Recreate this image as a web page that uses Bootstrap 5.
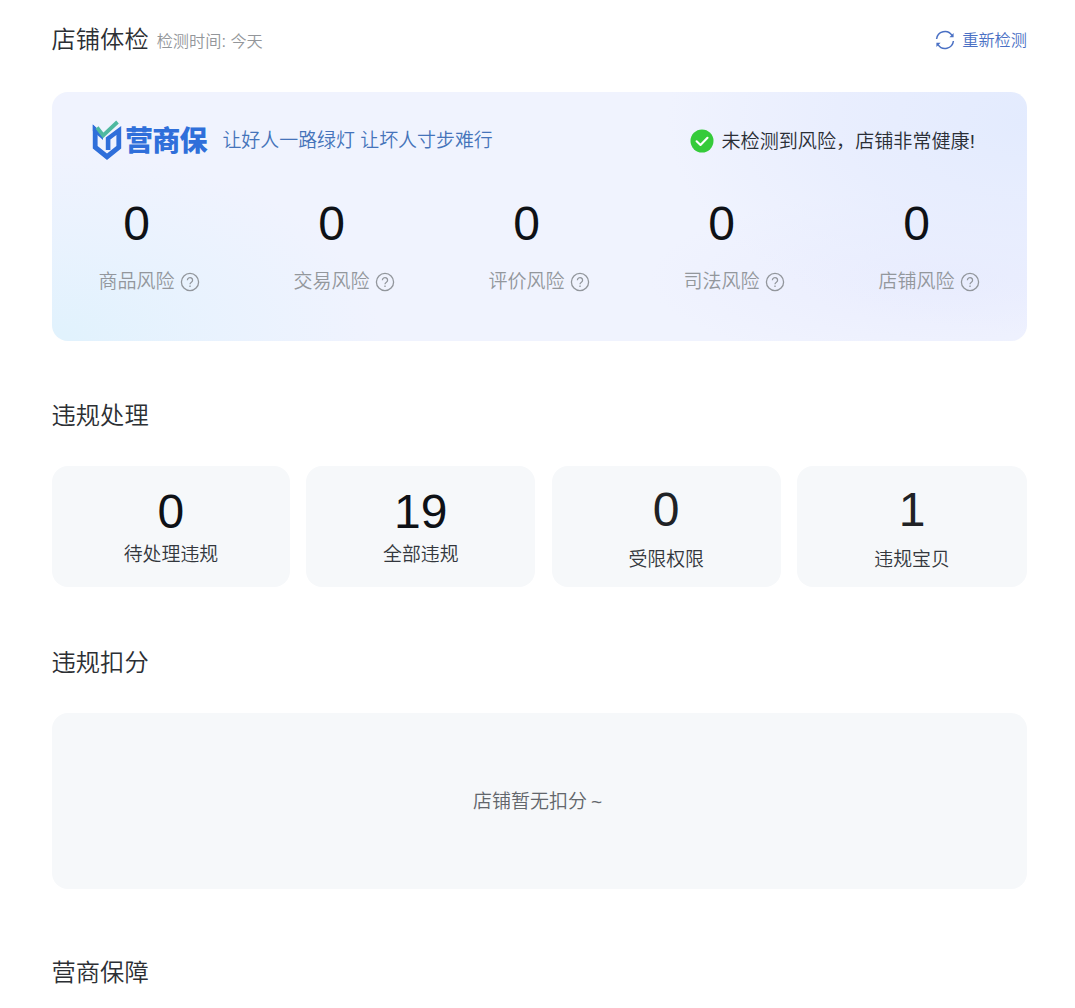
<!DOCTYPE html>
<html lang="zh-CN">
<head>
<meta charset="utf-8">
<meta name="viewport" content="width=device-width, initial-scale=1">
<title>店铺体检</title>
<link href="https://cdn.jsdelivr.net/npm/bootstrap@5.3.0/dist/css/bootstrap.min.css" rel="stylesheet">
<style>
body { font-family: "Liberation Sans", "Noto Sans CJK SC", sans-serif; font-weight: 350; color: #33373d; background: #fff; overflow: hidden; }
.page { padding: 20px 48px 0 52px; height: 1008px; overflow: hidden; }
.section-title { font-size: 24.3px; line-height: 40px; font-weight: 350; color: #2c2f34; margin: 0 0 0 -.5px; white-space: nowrap; }
.check-time { font-size: 16.2px; color: #93969a; margin-left: 8px; padding-top: 2px; }
.recheck { font-size: 16.2px; color: #4a70c4; text-decoration: none; gap: 7px; }
.banner { margin-top: 32px; height: 249px; border-radius: 16px; padding-top: 24px;
  background:
    radial-gradient(ellipse 330px 190px at 0% 100%, rgba(225,242,253,1) 5%, rgba(229,242,254,.65) 50%, rgba(240,243,254,0) 100%),
    radial-gradient(ellipse 360px 210px at 100% 12%, rgba(227,235,254,1) 0%, rgba(230,236,254,.75) 50%, rgba(240,243,254,0) 100%),
    radial-gradient(ellipse 300px 90px at 92% 75%, rgba(233,236,254,.9) 0%, rgba(240,243,254,0) 100%),
    #f0f3fe; }
.banner-head { height: 50px; padding: 0 50px 0 40px; }
.brand-name { font-size: 28px; line-height: 40px; font-weight: 900; color: #2f6fda; letter-spacing: -.7px; margin-left: 3px; padding-top: 1px; }
.slogan { font-size: 18.95px; line-height: 40px; color: #4573ba; margin-left: 15.5px; }
.health { font-size: 19.1px; line-height: 40px; color: #2a2e36; gap: 7px; margin-right: 2px; }
.health-text { padding-top: 2px; }
.risk-row { margin-top: 34px; }
.risk-item { width: 195px; }
.risk-box { width: 169px; }
.figure-num { font-size: 48px; line-height: 48px; font-weight: 400; color: #0e1116; }
.risk-label { font-size: 19px; line-height: 30px; color: #93979c; gap: 5px; margin-top: 18px; padding-left: 46.5px; }
.risk-label span { padding-top: 1px; }
.tiles { display: grid; grid-template-columns: 238fr 229fr 229fr 230fr; column-gap: 16.5px; margin-top: 30px; }
.tile { height: 121px; border-radius: 16px; background: #f6f8fa; padding-top: 22px; font-size: 18.9px; line-height: 28px; }
.tile-name { margin-top: 5px; }
.tile-alt { padding-top: 20px; }
.tile-alt .figure-num { color: #202225; }
.tile-alt .tile-name { margin-top: 12px; }
.empty-panel { height: 176px; border-radius: 16px; background: #f6f8fa; margin-top: 30px; padding-top: 3px; font-size: 19px; color: #62666b; }
.tilde { width: 19px; text-align: center; }
.block-violation { margin-top: 55px; }
.block-points { margin-top: 56px; }
.block-guard { margin-top: 64px; }
</style>
</head>
<body>
<svg width="0" height="0" class="position-absolute"><symbol id="help" viewBox="0 0 20 20"><g fill="none" stroke="#92969c" stroke-width="1.3"><circle cx="10" cy="10" r="8.6"/><path d="M7.4 8.2a2.6 2.5 0 1 1 4 2c-1 .6-1.4 1-1.4 2.1M10 13.5v1.6"/></g></symbol></svg>
<main class="page">
  <header class="d-flex justify-content-between align-items-center">
    <div class="d-flex align-items-center">
      <h1 class="section-title">店铺体检</h1>
      <span class="check-time">检测时间: 今天</span>
    </div>
    <a class="recheck d-flex align-items-center" href="#">
      <svg width="20" height="20" viewBox="0 0 20 20" fill="none" stroke="#4a70c4" stroke-width="1.5"><path d="M1.6 9A8.4 8.4 0 0 1 17 5.4M18.4 11A8.4 8.4 0 0 1 3 14.6"/><path d="M18.6 3V7.2H14.4ZM1.4 17V12.8H5.6Z" fill="#4a70c4" stroke="none"/></svg>
      <span>重新检测</span>
    </a>
  </header>

  <section class="banner">
    <div class="banner-head d-flex justify-content-between align-items-center">
      <div class="d-flex align-items-center">
        <svg width="30" height="42" viewBox="0 0 30 42" fill="none"><path d="M.8 4.5L5.6 9V26L15 33.6L24.4 26V15L18.4 19.5V30H13.8V17.5L29.2 6V28.5L15 40L.8 28.5Z" fill="#2f6fda"/><path d="M.8 4.5L11 14V20L.8 11Z" fill="#2f6fda"/><path d="M5 7.5L11.2 15.5L25.5 2" stroke="#4fb9a0" stroke-width="3.8"/></svg>
        <span class="brand-name">营商保</span>
        <span class="slogan">让好人一路绿灯 让坏人寸步难行</span>
      </div>
      <div class="health d-flex align-items-center">
        <svg width="24" height="24" viewBox="0 0 24 24"><circle cx="12" cy="12" r="11.5" fill="#35cb3a"/><path d="M6.6 12.3l3.9 3.7 7-7.2" fill="none" stroke="#fff" stroke-width="2.1" stroke-linecap="round" stroke-linejoin="round"/></svg>
        <span class="health-text">未检测到风险，店铺非常健康!</span>
      </div>
    </div>
    <div class="risk-row d-flex">
      <div class="risk-item"><div class="risk-box figure-num text-center">0</div><div class="risk-label d-flex align-items-center"><span>商品风险</span><svg width="20" height="20"><use href="#help"/></svg></div></div>
      <div class="risk-item"><div class="risk-box figure-num text-center">0</div><div class="risk-label d-flex align-items-center"><span>交易风险</span><svg width="20" height="20"><use href="#help"/></svg></div></div>
      <div class="risk-item"><div class="risk-box figure-num text-center">0</div><div class="risk-label d-flex align-items-center"><span>评价风险</span><svg width="20" height="20"><use href="#help"/></svg></div></div>
      <div class="risk-item"><div class="risk-box figure-num text-center">0</div><div class="risk-label d-flex align-items-center"><span>司法风险</span><svg width="20" height="20"><use href="#help"/></svg></div></div>
      <div class="risk-item"><div class="risk-box figure-num text-center">0</div><div class="risk-label d-flex align-items-center"><span>店铺风险</span><svg width="20" height="20"><use href="#help"/></svg></div></div>
    </div>
  </section>

  <section class="block-violation">
    <h2 class="section-title">违规处理</h2>
    <div class="tiles text-center">
      <div class="tile"><div class="figure-num">0</div><div class="tile-name">待处理违规</div></div>
      <div class="tile"><div class="figure-num">19</div><div class="tile-name">全部违规</div></div>
      <div class="tile tile-alt"><div class="figure-num">0</div><div class="tile-name">受限权限</div></div>
      <div class="tile tile-alt"><div class="figure-num">1</div><div class="tile-name">违规宝贝</div></div>
    </div>
  </section>

  <section class="block-points">
    <h2 class="section-title">违规扣分</h2>
    <div class="empty-panel d-flex align-items-center justify-content-center"><span>店铺暂无扣分</span><span class="tilde">~</span></div>
  </section>

  <section class="block-guard">
    <h2 class="section-title">营商保障</h2>
  </section>
</main>
<script src="https://cdn.jsdelivr.net/npm/bootstrap@5.3.0/dist/js/bootstrap.bundle.min.js"></script>
</body>
</html>
